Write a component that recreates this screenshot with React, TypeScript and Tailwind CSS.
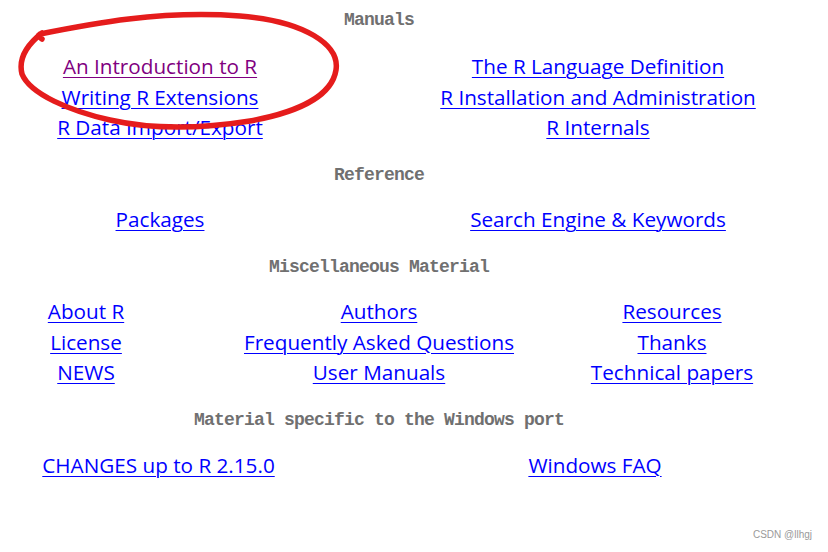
const link = 'text-[#0000ff] underline underline-offset-[3px] decoration-1 hover:text-[#551a8b]'

function Heading({ children }: { children: string }) {
  return (
    <h2 className="text-center font-['Liberation_Mono',monospace] text-[18px] leading-[24px] tracking-[-0.8px] font-bold text-[#707070]">
      {children}
    </h2>
  )
}

function Cell({ children, visited }: { children: string; visited?: boolean }) {
  return (
    <div className="text-center leading-[30.5px]">
      <a href="#" className={visited ? 'text-[#800080] underline underline-offset-[3px] decoration-1' : link}>
        {children}
      </a>
    </div>
  )
}

export default function App() {
  return (
    <div className="relative h-[552px] w-[828px] overflow-hidden bg-white font-['Open_Sans',sans-serif] text-[20.7px]">
      <div className="w-[758px] pt-[8px]">
        <Heading>Manuals</Heading>
        <div className="mt-[19px] grid grid-cols-[320px_316px] gap-x-[120px]">
          <div>
            <Cell visited>An Introduction to R</Cell>
            <Cell>Writing R Extensions</Cell>
            <Cell>R Data Import/Export</Cell>
          </div>
          <div>
            <Cell>The R Language Definition</Cell>
            <Cell>R Installation and Administration</Cell>
            <Cell>R Internals</Cell>
          </div>
        </div>

        <div className="mt-[20px]">
          <Heading>Reference</Heading>
        </div>
        <div className="mt-[17px] grid grid-cols-[320px_316px] gap-x-[120px]">
          <Cell>Packages</Cell>
          <Cell>Search Engine &amp; Keywords</Cell>
        </div>

        <div className="mt-[21px]">
          <Heading>Miscellaneous Material</Heading>
        </div>
        <div className="mt-[17px] grid grid-cols-[172px_414px_172px]">
          <div>
            <Cell>About R</Cell>
            <Cell>License</Cell>
            <Cell>NEWS</Cell>
          </div>
          <div>
            <Cell>Authors</Cell>
            <Cell>Frequently Asked Questions</Cell>
            <Cell>User Manuals</Cell>
          </div>
          <div>
            <Cell>Resources</Cell>
            <Cell>Thanks</Cell>
            <Cell>Technical papers</Cell>
          </div>
        </div>

        <div className="mt-[20px]">
          <Heading>Material specific to the Windows port</Heading>
        </div>
        <div className="mt-[18px] grid grid-cols-[317px_316px] gap-x-[120px]">
          <Cell>CHANGES up to R 2.15.0</Cell>
          <Cell>Windows FAQ</Cell>
        </div>
      </div>

      {/* hand-drawn red circle around the first manual */}
      <svg
        className="pointer-events-none absolute left-0 top-0"
        width="360"
        height="150"
        viewBox="0 0 360 150"
        fill="none"
        aria-hidden="true"
      >
        <path
          d="M42 39 C38 36 37 36 40 34 C90 24 160 10 240 16 C305 21 340 45 336 70 C332 95 300 112 250 121 C200 129 150 129 110 120 C70 111 30 94 22 74 C18 58 28 44 42 33"
          stroke="#e51c1c"
          strokeWidth="5.5"
          strokeLinecap="round"
          strokeLinejoin="round"
        />
      </svg>

      <div className="absolute bottom-[10px] right-[16px] font-['Liberation_Sans',sans-serif] text-[10px] text-[#9a9a9a]">
        CSDN @llhgj
      </div>
    </div>
  )
}
